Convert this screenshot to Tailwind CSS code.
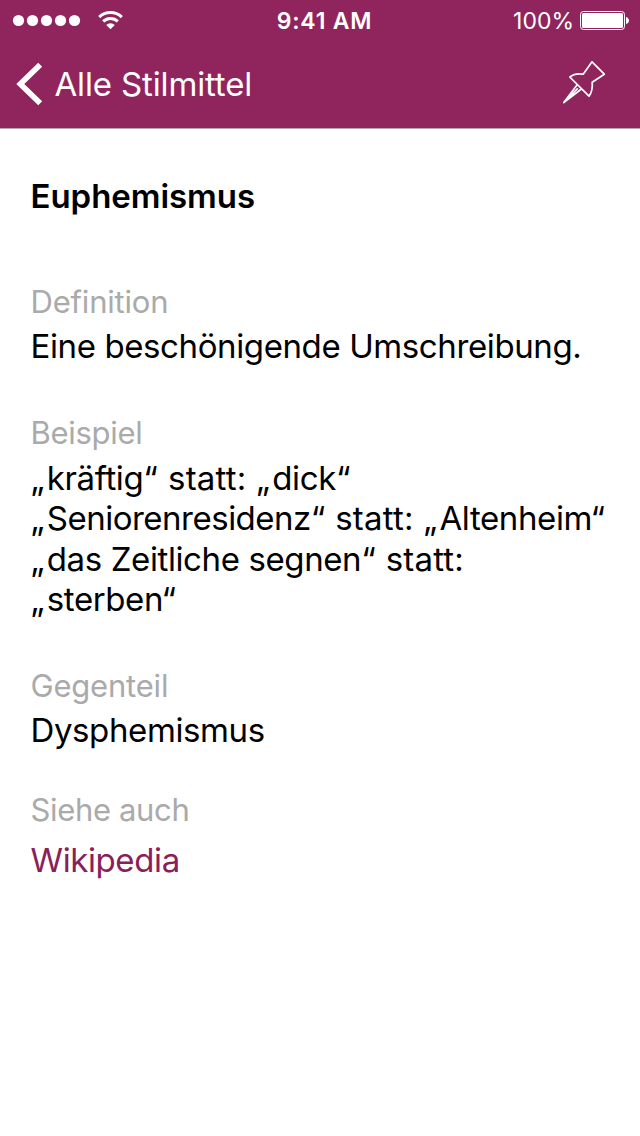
<!DOCTYPE html>
<html lang="de">
<head>
<meta charset="utf-8">
<title>Euphemismus</title>
<script src="https://cdn.jsdelivr.net/npm/@tailwindcss/browser@4"></script>
</head>
<body class="w-[640px] h-[1136px] overflow-hidden bg-white font-['Inter',sans-serif] text-black">
<header class="h-[129px] bg-[#90255d] border-b border-[#b2a9ac] text-white">
  <div class="h-10 grid grid-cols-[1fr_auto_1fr] items-center pl-3 pr-[11px]">
    <div class="flex items-center">
      <svg width="70" height="40" viewBox="0 0 70 40" fill="#fff"><circle cx="6.5" cy="20.5" r="5.6"/><circle cx="20.5" cy="20.5" r="5.6"/><circle cx="34.5" cy="20.5" r="5.6"/><circle cx="48.5" cy="20.5" r="5.6"/><circle cx="62.5" cy="20.5" r="5.6"/></svg>
      <svg class="ml-4" width="26" height="40" viewBox="98 0 26 40" fill="none" stroke="#fff" stroke-width="3"><path d="M99.2 17.1a16.2 16.2 0 0 1 22.6 0"/><path d="M103.2 21.4a10.4 10.4 0 0 1 14.6 0"/><path d="M106.2 24.9a6.2 6.2 0 0 1 8.6 0L110.5 29.2Z" fill="#fff" stroke="none"/></svg>
    </div>
    <div class="pl-2 pt-0.5 text-[23px] font-semibold tracking-[0.8px] whitespace-nowrap">9:41 AM</div>
    <div class="flex items-center justify-end gap-[6px]">
      <span class="pt-0.5 text-[23px]">100%</span>
      <svg width="49" height="40" viewBox="580 0 49 40" fill="#fff"><rect x="580.5" y="11.5" width="44" height="18" rx="3" fill="none" stroke="#fff"/><rect x="582" y="13" width="41" height="15" rx="1.5"/><path d="M626 17c4 1 4 6 0 7Z"/></svg>
    </div>
  </div>
  <nav class="h-[88px] flex items-center pl-4 pr-[34px]">
    <svg width="27" height="44" viewBox="16 62 27 44" fill="none" stroke="#fff" stroke-width="5.6"><path d="M40.2 64.8L20.3 84L40.2 103.2"/></svg>
    <span class="ml-[11.5px] text-[33px] leading-10 tracking-[-0.15px] whitespace-nowrap">Alle Stilmittel</span>
    <svg class="ml-auto overflow-visible" width="44" height="44" viewBox="562 62 44 44" fill="none" stroke="#fff" stroke-width="1.7" stroke-linejoin="round"><path d="M592 61.8L604.3 74.2L592.2 82.2Q593 91 589 96.2L569.8 77Q575 72.8 583.2 74.2ZM577.2 84.8L563.8 102.6L581.4 89M577.8 88.4L563.8 102.6"/></svg>
  </nav>
</header>
<main class="pl-[30.5px] whitespace-nowrap text-[33px] leading-10 tracking-[-0.39px]">
  <h1 class="pt-[47px] font-semibold tracking-[-0.05px]">Euphemismus</h1>
  <section class="mt-[66px]">
    <h2 class="h-11 text-[31px] tracking-[-0.2px] text-[#aaaaaa]">Definition</h2>
    <p>Eine beschönigende Umschreibung.</p>
  </section>
  <section class="mt-[47px]">
    <h2 class="h-11 text-[31px] tracking-[-0.3px] text-[#aaaaaa]">Beispiel</h2>
    <p class="pt-[0.5px] -mb-[0.5px] leading-[40.5px]"><span class="tracking-[2.4px]">„</span>kräftig<span class="tracking-[1.4px]">“</span> <span class="tracking-[0.2px]">statt: </span><span class="tracking-[2.4px]">„</span>dick“<br><span class="tracking-[2.4px]">„</span><span class="tracking-[-0.5px]">Seniorenresidenz</span><span class="tracking-[1px]">“</span> <span class="tracking-[0.2px]">statt: </span><span class="tracking-[2.4px]">„</span>Altenheim“<br><span class="tracking-[2.4px]">„</span>das Zeitliche segnen<span class="tracking-[1px]">“</span> <span class="tracking-[0.2px]">statt:</span><br><span class="tracking-[2.4px]">„</span>sterben“</p>
  </section>
  <section class="mt-[47px]">
    <h2 class="h-11 text-[31px] tracking-[-0.2px] text-[#aaaaaa]">Gegenteil</h2>
    <p>Dysphemismus</p>
  </section>
  <section class="mt-10">
    <h2 class="h-[50px] text-[31px] tracking-[-0.35px] text-[#aaaaaa]">Siehe auch</h2>
    <a class="block text-[#8a2059]">Wikipedia</a>
  </section>
</main>
</body>
</html>
